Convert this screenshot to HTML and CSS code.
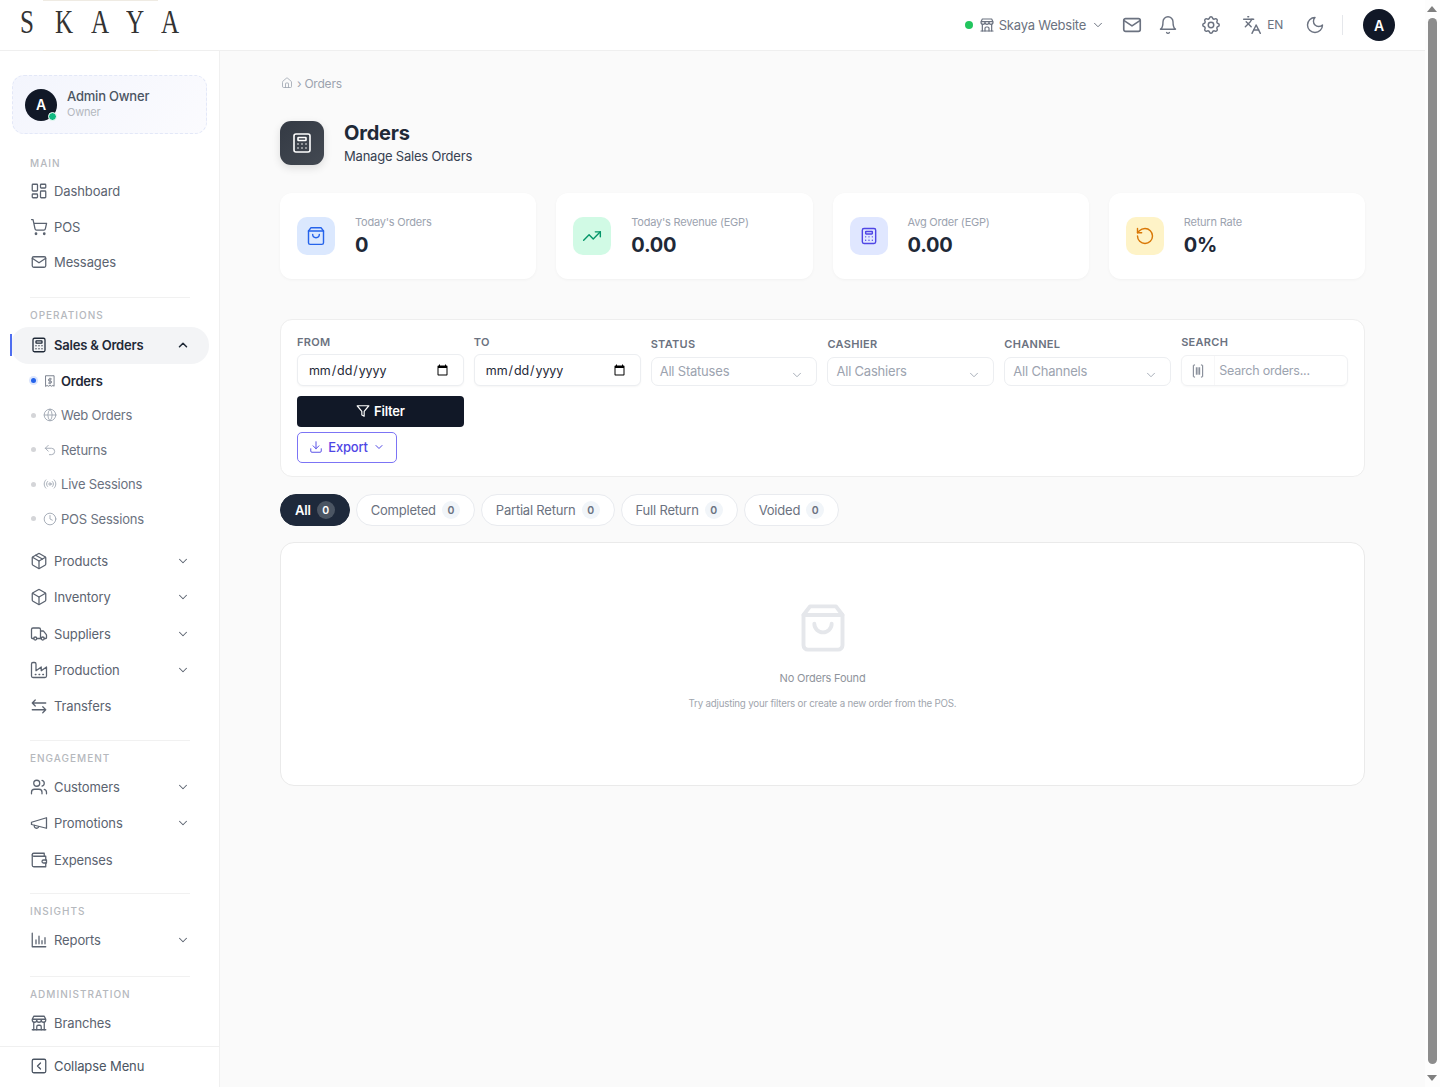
FILE: index.html
```html
<!DOCTYPE html>
<html lang="en">
<head>
<meta charset="UTF-8" />
<meta name="viewport" content="width=device-width, initial-scale=1.0" />
<title>Orders</title>
<link rel="stylesheet" href="styles.css">
</head>
<body>
<svg class="sprite" xmlns="http://www.w3.org/2000/svg">
  <symbol id="i-dash" viewBox="0 0 24 24"><rect width="7" height="9" x="3" y="3" rx="1"/><rect width="7" height="5" x="14" y="3" rx="1"/><rect width="7" height="9" x="14" y="12" rx="1"/><rect width="7" height="5" x="3" y="16" rx="1"/></symbol>
  <symbol id="i-cart" viewBox="0 0 24 24"><circle cx="8" cy="21" r="1"/><circle cx="19" cy="21" r="1"/><path d="M2.05 2.05h2l2.66 12.42a2 2 0 0 0 2 1.58h9.78a2 2 0 0 0 1.95-1.57l1.65-7.43H5.12"/></symbol>
  <symbol id="i-mail" viewBox="0 0 24 24"><rect x="3" y="5" width="18" height="14" rx="2"/><path d="M3 7l9 6 9-6"/></symbol>
  <symbol id="i-calc" viewBox="0 0 24 24"><rect x="4" y="3" width="16" height="18" rx="2"/><rect x="8" y="6.500" width="8" height="3" rx=".5"/><path d="M8 13v.01M12 13v.01M16 13v.01M8 17v.01M12 17v.01M16 17v.01"/></symbol>
  <symbol id="i-receipt" viewBox="0 0 24 24"><path d="M5 3h14v18l-2-1.500-2 1.500-3-1.500L9 21l-2-1.500L5 21z"/><path d="M14.500 8.500H11a1.600 1.600 0 0 0 0 3.500h2a1.600 1.600 0 0 1 0 3.500H9.500M12 7v10"/></symbol>
  <symbol id="i-globe" viewBox="0 0 24 24"><circle cx="12" cy="12" r="10"/><path d="M2 12h20M12 2a15 15 0 0 1 0 20 15 15 0 0 1 0-20"/></symbol>
  <symbol id="i-undo" viewBox="0 0 24 24"><path d="M9 14 4 9l5-5"/><path d="M4 9h10.500a5.500 5.500 0 0 1 0 11H11"/></symbol>
  <symbol id="i-radio" viewBox="0 0 24 24"><path d="M4.900 19.100C1 15.200 1 8.800 4.900 4.900"/><path d="M7.800 16.200c-2.300-2.300-2.300-6.100 0-8.500"/><circle cx="12" cy="12" r="2"/><path d="M16.200 7.800c2.300 2.300 2.300 6.100 0 8.500"/><path d="M19.100 4.900C23 8.800 23 15.100 19.100 19"/></symbol>
  <symbol id="i-clock" viewBox="0 0 24 24"><circle cx="12" cy="12" r="10"/><path d="M12 6v6l4 2"/></symbol>
  <symbol id="i-package" viewBox="0 0 24 24"><path d="M11 21.730a2 2 0 0 0 2 0l7-4A2 2 0 0 0 21 16V8a2 2 0 0 0-1-1.730l-7-4a2 2 0 0 0-2 0l-7 4A2 2 0 0 0 3 8v8a2 2 0 0 0 1 1.730z"/><path d="M12 22V12"/><path d="m3.300 7 8.700 5 8.700-5"/><path d="m7.500 4.270 9 5.150"/></symbol>
  <symbol id="i-box" viewBox="0 0 24 24"><path d="M11 21.730a2 2 0 0 0 2 0l7-4A2 2 0 0 0 21 16V8a2 2 0 0 0-1-1.730l-7-4a2 2 0 0 0-2 0l-7 4A2 2 0 0 0 3 8v8a2 2 0 0 0 1 1.730z"/><path d="M12 22V12"/><path d="m3.300 7 8.700 5 8.700-5"/></symbol>
  <symbol id="i-truck" viewBox="0 0 24 24"><path d="M14 18V6a2 2 0 0 0-2-2H4a2 2 0 0 0-2 2v11a1 1 0 0 0 1 1h2"/><path d="M15 18H9"/><path d="M19 18h2a1 1 0 0 0 1-1v-3.650a1 1 0 0 0-.22-.624l-3.480-4.350A1 1 0 0 0 17.520 8H14"/><circle cx="17" cy="18" r="2"/><circle cx="7" cy="18" r="2"/></symbol>
  <symbol id="i-factory" viewBox="0 0 24 24"><path d="M2 20a2 2 0 0 0 2 2h16a2 2 0 0 0 2-2V8l-7 5V8l-7 5V4a2 2 0 0 0-2-2H4a2 2 0 0 0-2 2Z"/><path d="M17 18h1M12 18h1M7 18h1"/></symbol>
  <symbol id="i-swap" viewBox="0 0 24 24"><path d="M21 8H3m0 0 4-4M3 8l4 4"/><path d="M3 17h18m0 0-4-4m4 4-4 4"/></symbol>
  <symbol id="i-users" viewBox="0 0 24 24"><path d="M16 21v-2a4 4 0 0 0-4-4H6a4 4 0 0 0-4 4v2"/><circle cx="9" cy="7" r="4"/><path d="M22 21v-2a4 4 0 0 0-3-3.870"/><path d="M16 3.130a4 4 0 0 1 0 7.750"/></symbol>
  <symbol id="i-mega" viewBox="0 0 24 24"><path d="m2 11 20-6v14L2 14z"/><path d="M11.600 16.800a3 3 0 1 1-5.800-1.600"/></symbol>
  <symbol id="i-wallet" viewBox="0 0 24 24"><path d="M21 12V7H5a2 2 0 0 1 0-4h14v4"/><path d="M3 5v14a2 2 0 0 0 2 2h16v-5"/><path d="M18 12a2 2 0 0 0 0 4h4v-4Z"/></symbol>
  <symbol id="i-chart" viewBox="0 0 24 24"><path d="M3 3v18h18"/><path d="M8 17v-5M12 17V7M16 17v-4M20 17V9"/></symbol>
  <symbol id="i-store" viewBox="0 0 24 24"><path d="M3 21h18"/><path d="M3 7v1a3 3 0 0 0 6 0V7m0 1a3 3 0 0 0 6 0V7m0 1a3 3 0 0 0 6 0V7H3l2-4h14l2 4"/><path d="M5 21V10.850M19 21V10.850M9 21v-4a2 2 0 0 1 2-2h2a2 2 0 0 1 2 2v4"/></symbol>
  <symbol id="i-collapse" viewBox="0 0 24 24"><rect x="3" y="3" width="18" height="18" rx="2"/><path d="m14 8-4 4 4 4"/></symbol>
  <symbol id="i-down" viewBox="0 0 24 24"><path d="m6 9 6 6 6-6"/></symbol>
  <symbol id="i-up" viewBox="0 0 24 24"><path d="m6 15 6-6 6 6"/></symbol>
  <symbol id="i-bell" viewBox="0 0 24 24"><path d="M6 8a6 6 0 0 1 12 0c0 7 3 9 3 9H3s3-2 3-9"/><path d="M10.300 21a1.940 1.940 0 0 0 3.400 0"/></symbol>
  <symbol id="i-gear" viewBox="0 0 24 24"><path d="M10.325 4.317c.426-1.756 2.924-1.756 3.350 0a1.724 1.724 0 0 0 2.573 1.066c1.543-.94 3.310.826 2.370 2.370a1.724 1.724 0 0 0 1.065 2.572c1.756.426 1.756 2.924 0 3.350a1.724 1.724 0 0 0-1.066 2.573c.94 1.543-.826 3.310-2.370 2.370a1.724 1.724 0 0 0-2.572 1.065c-.426 1.756-2.924 1.756-3.350 0a1.724 1.724 0 0 0-2.573-1.066c-1.543.94-3.310-.826-2.370-2.370a1.724 1.724 0 0 0-1.065-2.572c-1.756-.426-1.756-2.924 0-3.350a1.724 1.724 0 0 0 1.066-2.573c-.94-1.543.826-3.310 2.370-2.370.996.608 2.296.07 2.572-1.065z"/><circle cx="12" cy="12" r="3"/></symbol>
  <symbol id="i-lang" viewBox="0 0 24 24"><path d="m5 8 6 6"/><path d="m4 14 6-6 2-3"/><path d="M2 5h12"/><path d="M7 2h1"/><path d="m22 22-5-10-5 10"/><path d="M14 18h6"/></symbol>
  <symbol id="i-moon" viewBox="0 0 24 24"><path d="M12 3a6 6 0 0 0 9 9 9 9 0 1 1-9-9Z"/></symbol>
  <symbol id="i-home" viewBox="0 0 24 24"><path d="M15 21v-8a1 1 0 0 0-1-1h-4a1 1 0 0 0-1 1v8"/><path d="M3 10a2 2 0 0 1 .709-1.528l7-5.999a2 2 0 0 1 2.582 0l7 5.999A2 2 0 0 1 21 10v9a2 2 0 0 1-2 2H5a2 2 0 0 1-2-2z"/></symbol>
  <symbol id="i-bag" viewBox="0 0 24 24"><path d="M6 2 3 6v14a2 2 0 0 0 2 2h14a2 2 0 0 0 2-2V6l-3-4Z"/><path d="M3 6h18"/><path d="M16 10a4 4 0 0 1-8 0"/></symbol>
  <symbol id="i-trend" viewBox="0 0 24 24"><path d="M22 7l-8.500 8.500-5-5L2 17"/><path d="M16 7h6v6"/></symbol>
  <symbol id="i-rotate" viewBox="0 0 24 24"><path d="M3 12a9 9 0 1 0 9-9 9.750 9.750 0 0 0-6.740 2.740L3 8"/><path d="M3 3v5h5"/></symbol>
  <symbol id="i-filter" viewBox="0 0 24 24"><path d="M22 3H2l8 9.460V19l4 2v-8.540z"/></symbol>
  <symbol id="i-download" viewBox="0 0 24 24"><path d="M21 15v4a2 2 0 0 1-2 2H5a2 2 0 0 1-2-2v-4"/><path d="m7 10 5 5 5-5"/><path d="M12 15V3"/></symbol>
  <symbol id="i-scan" viewBox="0 0 24 24"><path d="M7 3H6a1 1 0 0 0-1 1v16a1 1 0 0 0 1 1h1M17 3h1a1 1 0 0 1 1 1v16a1 1 0 0 1-1 1h-1M9.500 7v10M12 7v10M14.500 7v10"/></symbol>
</svg>

<header class="topbar">
  <div class="logo"><div class="logo-text"><span>S</span><span>K</span><span>A</span><span>Y</span><span>A</span></div></div>
  <div class="top-actions">
    <span class="live-dot"></span>
    <svg class="ic ic-16 store-ic"><use href="#i-store"/></svg>
    <span class="site-name">Skaya Website</span>
    <svg class="ic ic-14 site-chev"><use href="#i-down"/></svg>
    <svg class="ic ic-mail"><use href="#i-mail"/></svg>
    <svg class="ic ic-20 bell-ic"><use href="#i-bell"/></svg>
    <svg class="ic gear-ic"><use href="#i-gear"/></svg>
    <svg class="ic ic-20 lang-ic"><use href="#i-lang"/></svg>
    <span class="lang-name">EN</span>
    <svg class="ic ic-20 moon-ic"><use href="#i-moon"/></svg>
    <span class="top-divider"></span>
    <span class="avatar">A</span>
  </div>
</header>

<div class="layout">
  <aside class="sidebar">
    <div class="side-scroll">
      <div class="user-card">
        <span class="avatar user-avatar">A<span class="online"></span></span>
        <div>
          <div class="user-name">Admin Owner</div>
          <div class="user-role">Owner</div>
        </div>
      </div>

      <section class="nav-group first">
        <div class="nav-label">MAIN</div>
        <a class="nav-item"><svg class="ic ic-18"><use href="#i-dash"/></svg>Dashboard</a>
        <a class="nav-item"><svg class="ic ic-18"><use href="#i-cart"/></svg>POS</a>
        <a class="nav-item"><svg class="ic ic-18"><use href="#i-mail"/></svg>Messages</a>
      </section>

      <section class="nav-group ops-group">
        <div class="nav-label ops">OPERATIONS</div>
        <a class="nav-item active"><svg class="ic ic-18"><use href="#i-calc"/></svg>Sales &amp; Orders<svg class="ic ic-14 chev"><use href="#i-up"/></svg></a>
        <a class="sub-item current"><span class="dot"></span><svg class="ic ic-14"><use href="#i-receipt"/></svg>Orders</a>
        <a class="sub-item"><span class="dot"></span><svg class="ic ic-14"><use href="#i-globe"/></svg>Web Orders</a>
        <a class="sub-item"><span class="dot"></span><svg class="ic ic-14"><use href="#i-undo"/></svg>Returns</a>
        <a class="sub-item"><span class="dot"></span><svg class="ic ic-14"><use href="#i-radio"/></svg>Live Sessions</a>
        <a class="sub-item"><span class="dot"></span><svg class="ic ic-14"><use href="#i-clock"/></svg>POS Sessions</a>
        <a class="nav-item after-sub"><svg class="ic ic-18"><use href="#i-package"/></svg>Products<svg class="ic ic-14 chev"><use href="#i-down"/></svg></a>
        <a class="nav-item"><svg class="ic ic-18"><use href="#i-box"/></svg>Inventory<svg class="ic ic-14 chev"><use href="#i-down"/></svg></a>
        <a class="nav-item"><svg class="ic ic-18"><use href="#i-truck"/></svg>Suppliers<svg class="ic ic-14 chev"><use href="#i-down"/></svg></a>
        <a class="nav-item"><svg class="ic ic-18"><use href="#i-factory"/></svg>Production<svg class="ic ic-14 chev"><use href="#i-down"/></svg></a>
        <a class="nav-item"><svg class="ic ic-18"><use href="#i-swap"/></svg>Transfers</a>
      </section>

      <section class="nav-group engage-group">
        <div class="nav-label">ENGAGEMENT</div>
        <a class="nav-item"><svg class="ic ic-18"><use href="#i-users"/></svg>Customers<svg class="ic ic-14 chev"><use href="#i-down"/></svg></a>
        <a class="nav-item"><svg class="ic ic-18"><use href="#i-mega"/></svg>Promotions<svg class="ic ic-14 chev"><use href="#i-down"/></svg></a>
        <a class="nav-item"><svg class="ic ic-18"><use href="#i-wallet"/></svg>Expenses</a>
      </section>

      <section class="nav-group insights-group">
        <div class="nav-label">INSIGHTS</div>
        <a class="nav-item"><svg class="ic ic-18"><use href="#i-chart"/></svg>Reports<svg class="ic ic-14 chev"><use href="#i-down"/></svg></a>
      </section>

      <section class="nav-group">
        <div class="nav-label">ADMINISTRATION</div>
        <a class="nav-item"><svg class="ic ic-18"><use href="#i-store"/></svg>Branches</a>
      </section>
    </div>
    <div class="side-foot"><svg class="ic ic-18"><use href="#i-collapse"/></svg>Collapse Menu</div>
  </aside>

  <main class="main">
    <nav class="crumbs"><svg class="ic ic-12"><use href="#i-home"/></svg><span class="crumb-sep">›</span><span>Orders</span></nav>

    <div class="page-head">
      <div class="page-icon"><svg class="ic ic-24"><use href="#i-calc"/></svg></div>
      <div>
        <h1>Orders</h1>
        <p>Manage Sales Orders</p>
      </div>
    </div>

    <div class="stats">
      <div class="stat">
        <div class="stat-icon blue"><svg class="ic ic-20"><use href="#i-bag"/></svg></div>
        <div><div class="stat-label">Today's Orders</div><div class="stat-value">0</div></div>
      </div>
      <div class="stat">
        <div class="stat-icon green"><svg class="ic ic-20"><use href="#i-trend"/></svg></div>
        <div><div class="stat-label">Today's Revenue (EGP)</div><div class="stat-value">0.00</div></div>
      </div>
      <div class="stat">
        <div class="stat-icon indigo"><svg class="ic ic-20"><use href="#i-calc"/></svg></div>
        <div><div class="stat-label">Avg Order (EGP)</div><div class="stat-value">0.00</div></div>
      </div>
      <div class="stat">
        <div class="stat-icon amber"><svg class="ic ic-20"><use href="#i-rotate"/></svg></div>
        <div><div class="stat-label">Return Rate</div><div class="stat-value">0%</div></div>
      </div>
    </div>

    <div class="filters">
      <div class="field">
        <label>FROM</label>
        <input class="date-input" type="date" />
      </div>
      <div class="field">
        <label>TO</label>
        <input class="date-input" type="date" />
      </div>
      <div class="field">
        <label>STATUS</label>
        <div class="fake-select">All Statuses<svg class="ic ic-14"><use href="#i-down"/></svg></div>
      </div>
      <div class="field">
        <label>CASHIER</label>
        <div class="fake-select">All Cashiers<svg class="ic ic-14"><use href="#i-down"/></svg></div>
      </div>
      <div class="field">
        <label>CHANNEL</label>
        <div class="fake-select">All Channels<svg class="ic ic-14"><use href="#i-down"/></svg></div>
      </div>
      <div class="field">
        <label class="search-label">SEARCH</label>
        <div class="search-box">
          <span class="scan"><svg class="ic ic-16"><use href="#i-scan"/></svg></span>
          <input type="text" placeholder="Search orders..." />
        </div>
      </div>
      <div class="filter-actions">
        <button class="btn-filter"><svg class="ic ic-14"><use href="#i-filter"/></svg>Filter</button>
        <button class="btn-export"><svg class="ic ic-14"><use href="#i-download"/></svg>Export<svg class="ic ic-12"><use href="#i-down"/></svg></button>
      </div>
    </div>

    <div class="tabs">
      <a class="tab on">All <span class="count">0</span></a>
      <a class="tab">Completed <span class="count">0</span></a>
      <a class="tab">Partial Return <span class="count">0</span></a>
      <a class="tab">Full Return <span class="count">0</span></a>
      <a class="tab">Voided <span class="count">0</span></a>
    </div>

    <div class="empty">
      <svg class="ic empty-ic"><use href="#i-bag"/></svg>
      <div class="empty-title">No Orders Found</div>
      <div class="empty-sub">Try adjusting your filters or create a new order from the POS.</div>
    </div>
  </main>
</div>

<div class="scrollbar"><span class="sb-up"></span><span class="sb-thumb"></span><span class="sb-down"></span></div>
</body>
</html>
```

FILE: styles.css
```css
*{box-sizing:border-box;}
body{margin:0;padding-right:15px;font-family:Inter,"Liberation Sans",sans-serif;font-size:13px;letter-spacing:-.016em;color:#374151;background:#fafafa;}
a{display:flex;text-decoration:none;color:inherit;}
.sprite{display:none;}

.ic{fill:none;stroke:currentColor;stroke-width:2;stroke-linecap:round;stroke-linejoin:round;flex:none;}
.ic-12{width:12px;height:12px;}
.ic-14{width:14px;height:14px;}
.ic-16{width:16px;height:16px;}
.ic-18{width:18px;height:18px;}
.ic-20{width:20px;height:20px;}
.ic-24{width:24px;height:24px;}
.ic-mail{width:22px;height:22px;}

/* top bar */
.topbar{height:51px;background:#fff;border-bottom:1px solid #efefef;display:flex;align-items:center;justify-content:space-between;}
.logo{width:220px;height:50px;position:relative;}
.logo::before{content:"";position:absolute;left:43px;top:0;width:115px;height:49px;border-top:1px solid #efebe3;border-bottom:1px solid #efebe3;}
.logo-text{position:absolute;left:20px;top:3px;display:flex;font-family:"Liberation Serif",serif;font-size:33px;line-height:38px;letter-spacing:0;color:#333;}
.logo-text span{display:block;width:35.3px;transform:scaleX(.76);transform-origin:left;}
.top-actions{display:flex;align-items:center;padding-right:30px;color:#6b7280;}
.live-dot{width:8px;height:8px;border-radius:50%;background:#22c55e;margin-right:6px;}
.store-ic{stroke-width:1.8;}
.site-name{margin-left:4px;font-size:13px;margin-top:-1px;}
.site-chev{margin-left:5px;stroke-width:1.7;}
.top-actions .ic-mail{margin-left:16px;stroke-width:1.8;}
.bell-ic{margin-left:15px;stroke-width:1.7;}
.gear-ic{width:22px;height:22px;margin-left:22px;stroke-width:1.6;}
.lang-ic{margin-left:20px;stroke-width:1.7;}
.lang-name{margin-left:5px;font-size:12px;margin-top:-1px;}
.moon-ic{margin-left:22px;stroke-width:1.7;}
.top-divider{width:1px;height:20px;background:#e5e7eb;margin:0 20px 0 17px;}
.avatar{width:32px;height:32px;border-radius:50%;background:#111827;color:#fff;display:flex;align-items:center;justify-content:center;font-size:14px;font-weight:600;position:relative;}

/* layout */
.layout{display:flex;height:1036px;}
.sidebar{width:220px;height:1036px;flex:none;background:#fff;border-right:1px solid #f0f0f0;display:flex;flex-direction:column;color:#5b6370;}
.side-scroll{flex:1;overflow:hidden;padding-top:24px;}
.user-card{margin:0 12px;height:59px;border:1px dashed #e3e8f8;border-radius:12px;background:linear-gradient(135deg,#f3f5fd,#fbfbfe);display:flex;align-items:center;gap:10px;padding-left:12px;}
.user-name{font-size:13px;font-weight:500;color:#4b5563;line-height:17px;margin-top:-1px;}
.user-role{font-size:11px;color:#b4b8bf;line-height:15px;}
.online{position:absolute;right:0;bottom:0;width:9px;height:9px;border-radius:50%;background:#10b981;border:1.5px solid #fff;}

.nav-group{margin:0 29px 16px 30px;padding-top:11px;border-top:1px solid #f1f1f1;}
.nav-group.first{border-top:0;margin-top:23px;margin-bottom:17px;padding-top:0;}
.nav-group.first .nav-label{margin-bottom:4px;}
.nav-group.first .nav-item{height:35.75px;}
.ops-group{margin-bottom:15.75px;}
.engage-group{margin-bottom:15.5px;}
.insights-group{margin-bottom:17px;}
.nav-label{height:12px;line-height:12px;font-size:10px;font-weight:500;letter-spacing:1px;color:#b5b8bd;margin-bottom:5px;}
.nav-label.ops{margin-bottom:6px;}
.nav-item{height:36.25px;align-items:center;gap:6px;margin:0 -18px 0 0;position:relative;font-size:13px;letter-spacing:-.008em;}
.nav-item .ic-18{stroke-width:1.7;}
.chev{margin-left:auto;margin-right:18px;stroke-width:1.8;}
.nav-item.active{margin-left:-19px;margin-right:-19px;padding-left:19px;background:#f3f4f6;border-radius:18px;font-weight:600;color:#1f2937;letter-spacing:-.016em;}
.nav-item.active .chev{margin-right:19px;stroke-width:2.6;}
.nav-item.active::before{content:"";position:absolute;left:-1px;top:7px;width:2px;height:22px;background:#4f6ef0;}
.sub-item{height:34.5px;align-items:center;font-size:13px;color:#6b7280;}
.sub-item .ic-14{margin:0 4px 0 7px;stroke-width:1.5;color:#9ca3af;}
.dot{width:5px;height:5px;border-radius:50%;background:#d4d5d8;flex:none;margin-left:1px;}
.sub-item.current{font-weight:600;color:#1f2937;}
.sub-item.current .dot{background:#2563eb;box-shadow:0 0 0 2px #dbe5fd;}
.sub-item.current .ic-14{color:#6b7280;}
.after-sub{margin-top:7px;}
.side-foot{height:41px;flex:none;border-top:1px solid #f0f0f0;display:flex;align-items:center;gap:6px;padding:0 0 3px 30px;font-size:13px;letter-spacing:-.008em;color:#4b5563;}
.side-foot .ic{stroke-width:1.7;}

/* main */
.main{flex:1;padding:25px 60px 0;min-width:0;}
.crumbs{display:flex;align-items:center;height:14px;color:#9ca3af;font-size:12px;}
.crumbs .ic{stroke-width:1.6;margin-left:1px;}
.crumb-sep{margin:0 3px 0 4px;}
.page-head{display:flex;align-items:flex-start;gap:20px;margin-top:31px;}
.page-icon{width:44px;height:44px;border-radius:11px;background:linear-gradient(135deg,#343a44,#434952);color:#fff;display:flex;align-items:center;justify-content:center;box-shadow:0 3px 8px rgba(0,0,0,.12);}
.page-icon .ic{stroke-width:1.6;}
h1{margin:0;font-size:20px;line-height:24px;font-weight:700;color:#1f2937;}
.page-head p{margin:3px 0 0;font-size:13px;line-height:16px;color:#374151;}

.stats{display:grid;grid-template-columns:repeat(4,1fr);gap:20px;margin-top:28px;}
.stat{height:86px;background:#fff;border-radius:12px;box-shadow:0 1px 3px rgba(0,0,0,.04);display:flex;align-items:center;gap:20px;padding-left:17px;}
.stat-icon{width:38px;height:38px;border-radius:10px;display:flex;align-items:center;justify-content:center;}
.stat-icon .ic{stroke-width:1.7;}
.blue{background:#dbe8fe;color:#2563eb;}
.green{background:#d1fae5;color:#059669;}
.indigo{background:#e0e7ff;color:#4f46e5;}
.amber{background:#fef3c7;color:#d97706;}
.stat-label{font-size:11px;line-height:14px;color:#9ca3af;}
.stat-value{font-size:20px;line-height:26px;font-weight:700;color:#1f2937;margin-top:3px;}

.filters{margin-top:40px;height:158px;background:#fff;border:1px solid #eee;border-radius:12px;padding:0 16px;display:grid;grid-template-columns:repeat(6,1fr);column-gap:10px;grid-template-rows:66px auto;}
.field{display:flex;flex-direction:column;justify-content:flex-end;min-width:0;}
.field label{font-size:11px;line-height:14px;font-weight:600;color:#6b7280;letter-spacing:.3px;margin-bottom:5px;}
.field .fake-select{margin-top:1px;}
.date-input{height:32px;width:100%;border:1px solid #eceef1;border-radius:6px;padding:0 12px 0 10px;font-family:inherit;font-size:12.500px;letter-spacing:-.1px;color:#1f2937;background:#fff;box-shadow:0 1px 2px rgba(0,0,0,.04);}
.fake-select{height:29px;border:1px solid #eceef1;border-radius:7px;padding:0 12px 0 8px;display:flex;align-items:center;justify-content:space-between;color:#9ca3af;font-size:13px;line-height:25px;}
.fake-select .ic{margin-top:6px;stroke-width:1.5;}
.search-box{height:31px;display:flex;border:1px solid #f0f1f3;border-radius:6px;box-shadow:0 1px 2px rgba(0,0,0,.03);}
.field .search-label{margin-bottom:6px;}
.scan{width:32px;flex:none;display:flex;align-items:center;justify-content:center;color:#6b7280;}
.scan .ic{stroke-width:1.4;}
.search-box input{flex:1;min-width:0;border:0;border-left:1px solid #f7f7f8;outline:0;padding:0 4px;font-family:inherit;font-size:12.500px;letter-spacing:inherit;background:transparent;}
.search-box input::placeholder{color:#9ca3af;}
.filter-actions{grid-column:1;display:flex;flex-direction:column;align-items:flex-start;gap:5px;padding-top:10px;}
.btn-filter{width:100%;height:31px;border:0;border-radius:4px;padding:0 0 2px;background:#111827;color:#fff;font-family:inherit;font-size:13px;letter-spacing:inherit;font-weight:600;display:flex;align-items:center;justify-content:center;gap:4px;}
.btn-export{width:100px;height:31px;border:1px solid #7c74f5;border-radius:5px;padding:0 0 2px;background:#fff;color:#4f46e5;font-family:inherit;font-size:13px;letter-spacing:inherit;font-weight:500;display:flex;align-items:center;justify-content:center;gap:5px;}
.btn-export .ic-14{stroke-width:1.6;}

.tabs{display:flex;gap:6px;margin-top:17px;}
.tab{height:32px;align-items:center;gap:6px;padding:0 14px;border:1px solid #e9ebef;border-radius:16px;background:#fff;font-size:13px;color:#6b7280;}
.tab.on{background:#1e293b;border-color:#1e293b;color:#fff;font-weight:600;}
.count{min-width:18px;height:18px;border-radius:9px;background:#f1f5f9;font-size:10.500px;font-weight:600;display:flex;align-items:center;justify-content:center;color:#6b7280;}
.tab.on .count{background:#4b5563;color:#fff;}

.empty{margin-top:16px;height:244px;background:#fff;border:1px solid #eaeaea;border-radius:14px;display:flex;flex-direction:column;align-items:center;padding-top:58.500px;}
.empty-ic{width:52px;height:52px;color:#e5e7eb;stroke-width:1.8;}
.empty-title{margin-top:17.500px;font-size:11px;line-height:14px;color:#8f949c;}
.empty-sub{margin-top:12px;font-size:9.750px;line-height:14px;color:#a0a5ad;}

/* drawn scrollbar, the photo has one and headless chrome does not */
.scrollbar{position:fixed;top:0;right:0;bottom:0;width:15px;background:#fdfdfd;}
.sb-thumb{position:absolute;left:3px;top:18px;width:9px;height:1046px;border-radius:5px;background:#8c8c8c;}
.sb-up,.sb-down{position:absolute;left:2px;width:0;height:0;border-left:5.5px solid transparent;border-right:5.5px solid transparent;}
.sb-up{top:6px;border-bottom:6px solid #7f7f7f;}
.sb-down{bottom:6px;border-top:6px solid #7f7f7f;}
```
